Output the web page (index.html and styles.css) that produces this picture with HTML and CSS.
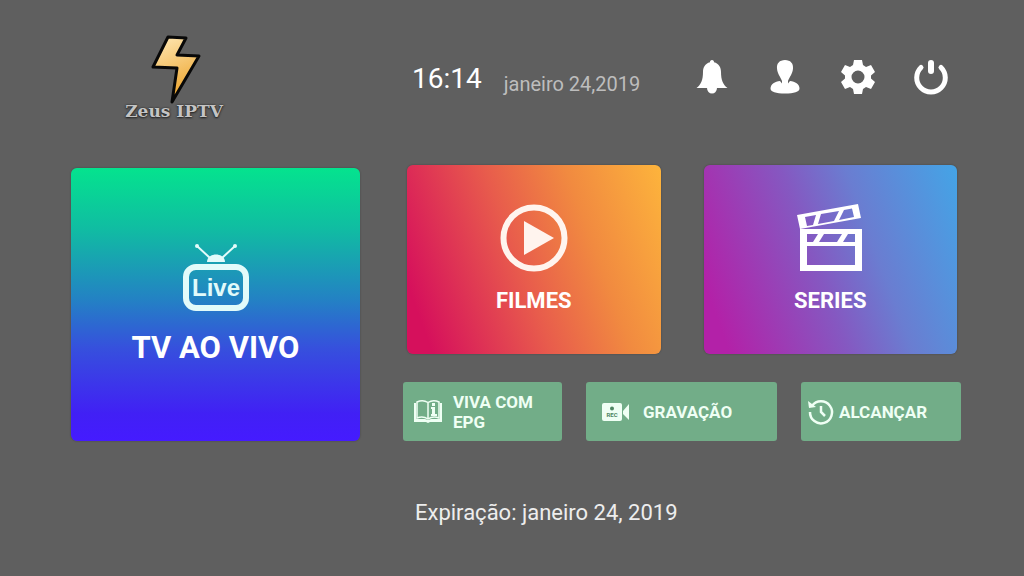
FILE: index.html
```html
<!DOCTYPE html>
<html lang="pt-BR">
<head>
    <meta charset="UTF-8">
    <meta name="viewport" content="width=device-width, initial-scale=1.0">
    <title>Zeus IPTV</title>
    <link rel="stylesheet" href="styles.css">
</head>
<body>
    <header class="header">
        <div class="logo">
            <svg width="56" height="70" viewBox="0 0 56 70" aria-hidden="true">
                <defs>
                    <linearGradient id="bolt" x1="0" y1="0" x2="0.3" y2="1">
                        <stop offset="0" stop-color="#ffe9b8"/>
                        <stop offset="1" stop-color="#eda52d"/>
                    </linearGradient>
                </defs>
                <path class="bolt" d="M22 3L40 4L31 21L53 22L26 68L31 34L7 33Z"/>
            </svg>
            <span class="logo-text">Zeus IPTV</span>
        </div>
        <div class="top-bar">
            <div class="clock">
                <span class="time">16:14</span>
                <span class="date">janeiro 24,2019</span>
            </div>
            <nav class="top-icons">
                <button type="button" class="icon-btn" aria-label="Notificações">
                    <svg width="36" height="36" viewBox="0 0 36 36">
                        <path d="M18 1C19.4 1 20.2 2 20 3.300C25 4.600 27 8.500 27 13C27 21 29 25.500 33.500 29H2.500C7 25.500 9 21 9 13C9 8.500 11 4.600 16 3.300C15.800 2 16.600 1 18 1Z"/>
                        <path d="M13 29H23A5 5.500 0 0 1 13 29Z"/>
                    </svg>
                </button>
                <button type="button" class="icon-btn" aria-label="Conta">
                    <svg width="36" height="36" viewBox="0 0 36 36">
                        <path d="M18 1C23.500 1 26.500 4.500 26 9.500C25.500 15 23 17 21 22V26H15V22C13 17 10.500 15 10 9.500C9.500 4.500 12.500 1 18 1Z"/>
                        <path d="M13 22L15 24.500H21L23 22C28 22.500 32.500 25 32.500 29.500C32.500 33 27 34.500 18 34.500S3.500 33 3.500 29.500C3.500 25 8 22.500 13 22Z"/>
                    </svg>
                </button>
                <button type="button" class="icon-btn" aria-label="Configurações">
                    <svg width="36" height="36" viewBox="0 0 36 36">
                        <path fill-rule="evenodd" d="M14 1H22L23 6L26 8L31 6L35 13L31 16.500V19.500L35 23L31 30L26 28L23 30L22 35H14L13 30L10 28L5 30L1 23L5 19.500V16.500L1 13L5 6L10 8L13 6ZM18 11.500A6.500 6.500 0 1 0 18 24.500A6.500 6.500 0 1 0 18 11.500Z"/>
                    </svg>
                </button>
                <button type="button" class="icon-btn" aria-label="Sair">
                    <svg width="36" height="36" viewBox="0 0 36 36">
                        <g fill="none" stroke="#fff" stroke-linecap="round">
                            <path d="M8 8.500A14.300 14.300 0 1 0 28 8.500" stroke-width="5"/>
                            <path d="M18 4V12" stroke-width="6"/>
                        </g>
                    </svg>
                </button>
            </nav>
        </div>
    </header>

    <main class="menu">
        <button type="button" class="card live">
            <svg width="66" height="68" viewBox="0 0 66 68" aria-hidden="true">
                <g fill="none" stroke="#e2fbfa">
                    <path d="M14 2L27 14M52 2L39 14" stroke-width="2"/>
                    <rect x="3" y="23" width="60" height="41" rx="10" stroke-width="6"/>
                </g>
                <g fill="#e2fbfa">
                    <circle cx="14" cy="2" r="2"/>
                    <circle cx="52" cy="2" r="2"/>
                    <path d="M24 18C24 8 42 8 42 18Z"/>
                    <text class="live-text" x="33" y="52" text-anchor="middle">Live</text>
                </g>
            </svg>
            <span>TV AO VIVO</span>
        </button>

        <div class="right">
            <div class="card-row">
                <button type="button" class="card movies">
                    <svg width="68" height="68" viewBox="0 0 68 68" aria-hidden="true">
                        <circle cx="34" cy="34" r="30.500" fill="none" stroke="#fff4ee" stroke-width="6"/>
                        <path d="M24 17V51L54 34Z" fill="#fff4ee"/>
                    </svg>
                    <span>FILMES</span>
                </button>
                <button type="button" class="card series">
                    <svg width="68" height="68" viewBox="0 0 68 68" aria-hidden="true">
                        <path fill-rule="evenodd" d="M4 25H66V67H4ZM11 42V61H59V42ZM11 30V38H17L22 30ZM28 30L23 38H41L46 30ZM52 30L47 38H59V30Z"/>
                        <path fill-rule="evenodd" d="M1 11L62 0L65 14L4 25ZM9 13L11 22L17 21L20 11ZM25 10L22 20L38 17L43 7ZM48 6L43 16L58 13L56 4.500Z"/>
                    </svg>
                    <span>SERIES</span>
                </button>
            </div>

            <div class="small-row">
                <button type="button" class="small-btn epg">
                    <svg width="30" height="26" viewBox="0 0 30 26" aria-hidden="true">
                        <path d="M4 3C8 1 12 1.500 15 3.500C18 1.500 22 1 26 3V19C22 17.500 18 18 15 20C12 18 8 17.500 4 19ZM15 4V20" fill="none" stroke="#effff4" stroke-width="1.500"/>
                        <path d="M1 4H3V20H12L15 21L18 20H27V4H29V23H17L15 24L13 23H1Z"/>
                        <path d="M18 8H22V15H24V17H18V15H19V10H18ZM19 4H22V7H19Z"/>
                    </svg>
                    <span>VIVA COM EPG</span>
                </button>
                <button type="button" class="small-btn rec">
                    <svg width="28" height="20" viewBox="0 0 28 20" aria-hidden="true">
                        <rect x="0" y="1" width="20" height="18" rx="2"/>
                        <path d="M21 9L27 2V18L21 12Z"/>
                        <circle cx="10" cy="6.500" r="2" fill="#4f8663"/>
                        <text class="rec-text" x="10" y="15" text-anchor="middle">REC</text>
                    </svg>
                    <span>GRAVAÇÃO</span>
                </button>
                <button type="button" class="small-btn catchup">
                    <svg width="26" height="26" viewBox="0 0 26 26" aria-hidden="true">
                        <g fill="none" stroke="#effff4" stroke-width="2.500">
                            <path d="M4 7A11 11 0 1 1 2 13"/>
                            <path d="M13 7V13L17 17"/>
                        </g>
                        <path d="M0 2L1 9L8 8Z" fill="#effff4"/>
                    </svg>
                    <span>ALCANÇAR</span>
                </button>
            </div>
        </div>
    </main>

    <footer class="footer">
        <p class="expiry">Expiração: janeiro 24, 2019</p>
    </footer>
</body>
</html>
```
FILE: styles.css
```css
* {
    box-sizing: border-box;
}

body {
    margin: 0;
    padding: 34px 63px 32px 71px;
    background-color: #5f5f5f;
    font-family: Roboto, Arial, sans-serif;
    color: #fff;
}

button {
    border: none;
    padding: 0;
    font-family: inherit;
    color: #fff;
    cursor: pointer;
}

svg {
    display: block;
    flex-shrink: 0;
    overflow: visible;
    fill: #fff;
}

.header,
.menu,
.footer {
    display: grid;
    grid-template-columns: 289fr 558fr;
    column-gap: 43px;
}

.logo {
    display: flex;
    flex-direction: column;
    align-items: center;
    width: 206px;
}

.bolt {
    fill: url(#bolt);
    stroke: #080808;
    stroke-width: 3;
    stroke-linejoin: round;
}

.logo-text {
    font-family: "DejaVu Serif", serif;
    font-size: 17px;
    font-weight: bold;
    line-height: 20px;
    margin-top: -3px;
    color: #c4c4c4;
    white-space: nowrap;
    text-shadow: 0 0 2px #222, 0 1px 2px #222;
}

.top-bar {
    display: flex;
    justify-content: space-between;
    align-items: flex-start;
    padding: 25px 12px 0 9px;
}

.clock {
    display: flex;
    align-items: flex-end;
    gap: 22px;
}

.time {
    font-size: 28px;
    line-height: 40px;
}

.date {
    font-size: 20px;
    line-height: 30px;
    color: #bdbdbd;
}

.top-icons {
    display: flex;
    gap: 37px;
}

.icon-btn {
    background: none;
}

.menu {
    margin-top: 44px;
}

.card {
    display: flex;
    flex-direction: column;
    align-items: center;
    justify-content: center;
    border-radius: 6px;
    font-size: 22px;
    font-weight: bold;
    line-height: 28px;
    box-shadow: 0 0 2px rgba(0, 0, 0, 0.3);
}

.live {
    gap: 18px;
    margin-top: 3px;
    font-size: 31px;
    line-height: 36px;
    background: linear-gradient(#04e38e 0%, #10bda2 22%, #2382c4 48%, #3650dd 66%, #4120f5 90%, #451bff 100%);
}

.live-text {
    font-family: "Liberation Sans Narrow", "Liberation Sans", sans-serif;
    font-size: 24px;
    font-weight: bold;
}

.right {
    display: flex;
    flex-direction: column;
    gap: 28px;
}

.card-row {
    display: grid;
    grid-template-columns: 1fr 1fr;
    gap: 43px;
    padding: 0 4px;
}

.card-row .card {
    gap: 15px;
    padding: 39px 0;
}

.movies {
    background: linear-gradient(70deg, #d6105c 8%, #e85c4c 45%, #f18a40 70%, #fdb43c 100%);
}

.series {
    background: linear-gradient(70deg, #b321a8 8%, #8558c1 45%, #6a7dd1 65%, #44a4e6 100%);
}

.small-row {
    display: grid;
    grid-template-columns: 159fr 191fr 160fr;
    gap: 24px;
}

.small-btn {
    display: flex;
    align-items: center;
    min-height: 59px;
    border-radius: 3px;
    background-color: #72ad88;
    font-size: 17px;
    font-weight: bold;
    line-height: 20px;
    text-align: left;
    color: #effff4;
}

.small-btn svg {
    fill: #effff4;
}

.epg {
    gap: 10px;
    padding: 0 20px 0 10px;
}

.rec {
    gap: 13px;
    padding-left: 16px;
}

.rec-text {
    font-size: 6px;
    fill: #4f8663;
}

.catchup {
    gap: 5px;
    padding-left: 7px;
}

.footer {
    margin-top: 58px;
}

.expiry {
    grid-column: 2;
    margin: 0;
    padding-left: 12px;
    font-size: 22px;
    line-height: 28px;
    color: #ededed;
}
```
